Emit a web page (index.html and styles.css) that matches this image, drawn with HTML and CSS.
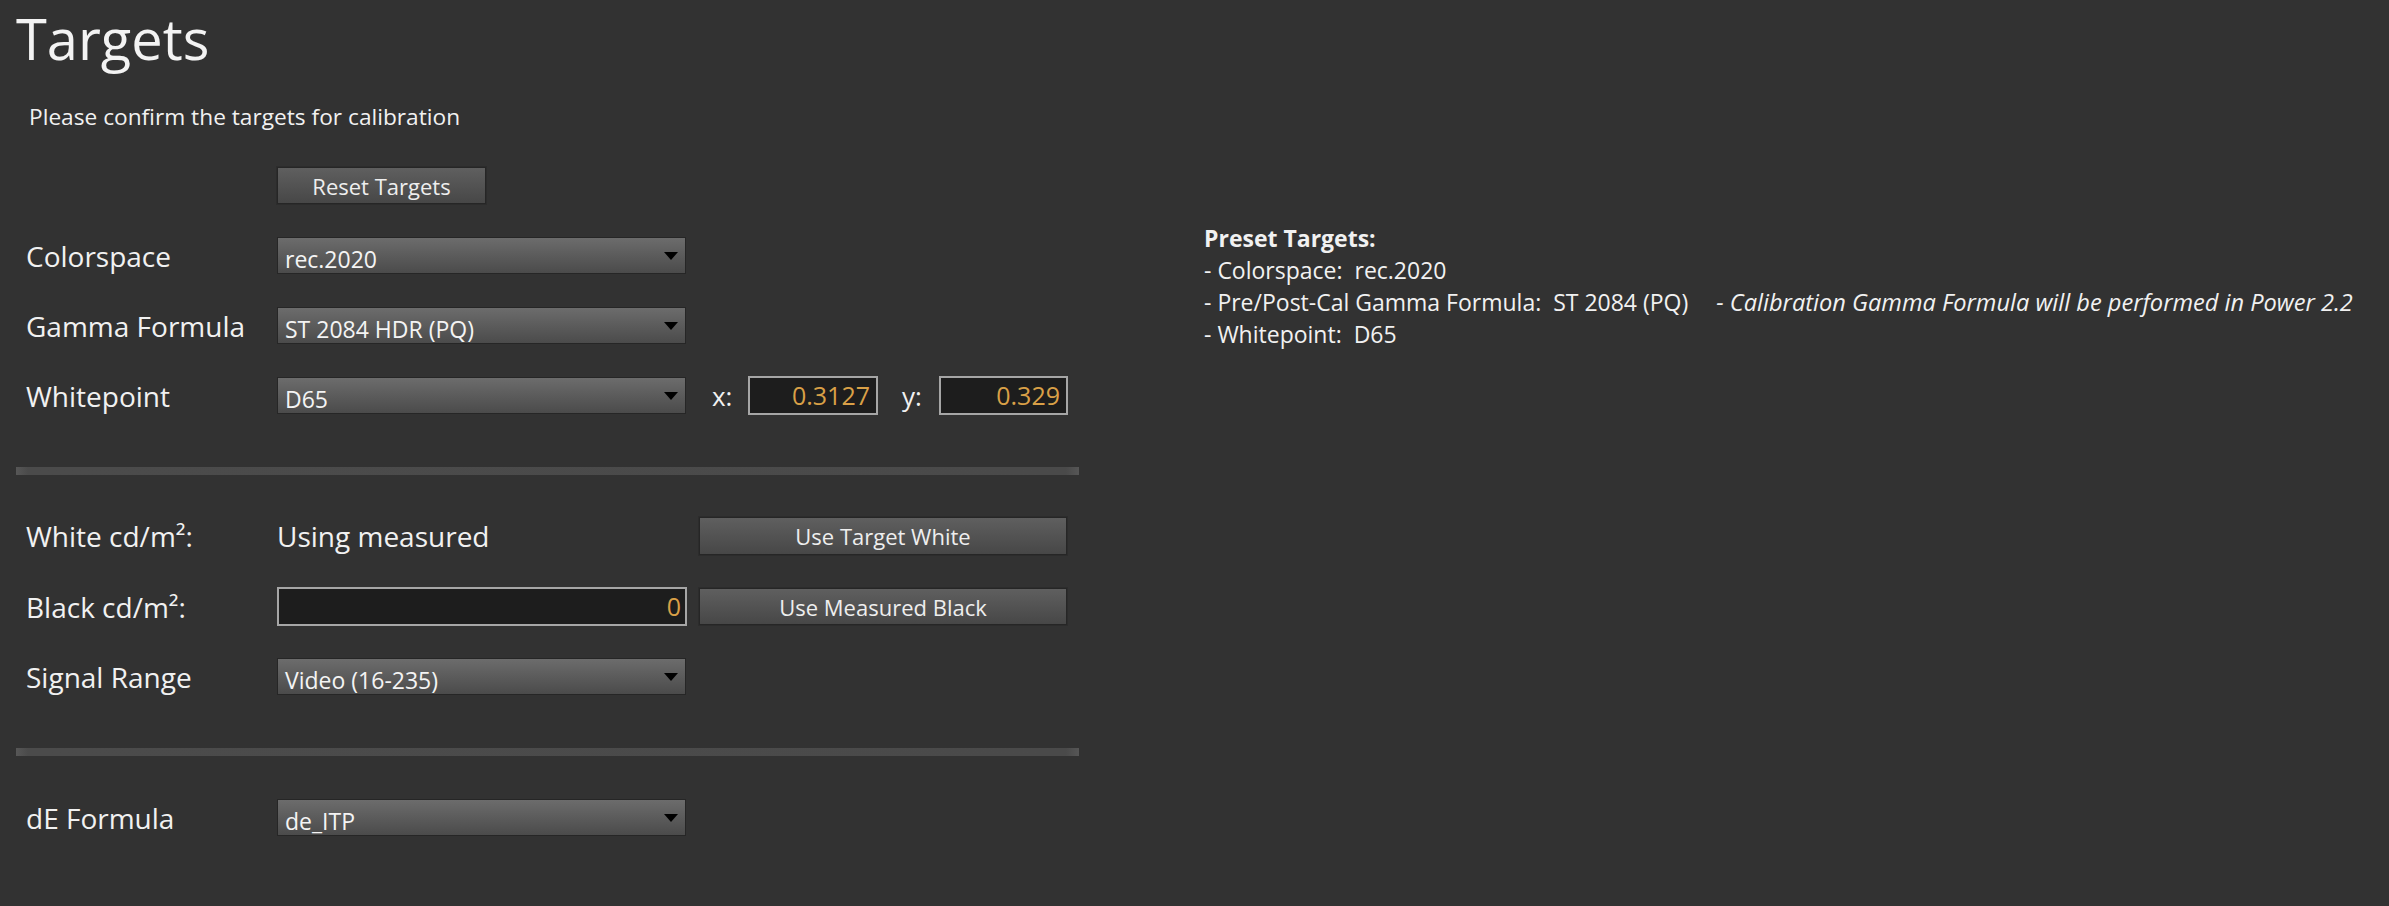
FILE: index.html
```html
<!DOCTYPE html>
<html lang="en">
<head>
<meta charset="utf-8">
<title>Targets</title>
<link rel="stylesheet" href="styles.css">
</head>
<body>
<div class="page">
  <div class="left">
    <h1 class="title">Targets</h1>
    <p class="subtitle">Please confirm the targets for calibration</p>
    <div class="reset-row"><button class="btn btn-reset">Reset Targets</button></div>

    <div class="group">
      <div class="row">
        <span class="label">Colorspace</span>
        <div class="select"><span class="select-text">rec.2020</span><svg class="arrow" width="14" height="8" viewBox="0 0 14 8"><path d="M0 0H14L7 8Z" fill="#000"/></svg></div>
      </div>
      <div class="row">
        <span class="label">Gamma Formula</span>
        <div class="select"><span class="select-text">ST 2084 HDR (PQ)</span><svg class="arrow" width="14" height="8" viewBox="0 0 14 8"><path d="M0 0H14L7 8Z" fill="#000"/></svg></div>
      </div>
      <div class="row">
        <span class="label">Whitepoint</span>
        <div class="select"><span class="select-text">D65</span><svg class="arrow" width="14" height="8" viewBox="0 0 14 8"><path d="M0 0H14L7 8Z" fill="#000"/></svg></div>
        <span class="coord-label coord-x">x:</span>
        <div class="field field-x">0.3127</div>
        <span class="coord-label coord-y">y:</span>
        <div class="field field-y">0.329</div>
      </div>
    </div>

    <div class="separator sep-1"></div>

    <div class="group group-lum">
      <div class="row row-white">
        <span class="label">White cd/m²:</span>
        <span class="value">Using measured</span>
        <button class="btn btn-side btn-white">Use Target White</button>
      </div>
      <div class="row">
        <span class="label">Black cd/m²:</span>
        <div class="field field-black">0</div>
        <button class="btn btn-side">Use Measured Black</button>
      </div>
      <div class="row">
        <span class="label">Signal Range</span>
        <div class="select"><span class="select-text">Video (16-235)</span><svg class="arrow" width="14" height="8" viewBox="0 0 14 8"><path d="M0 0H14L7 8Z" fill="#000"/></svg></div>
      </div>
    </div>

    <div class="separator sep-2"></div>

    <div class="group group-de">
      <div class="row">
        <span class="label">dE Formula</span>
        <div class="select"><span class="select-text">de_ITP</span><svg class="arrow" width="14" height="8" viewBox="0 0 14 8"><path d="M0 0H14L7 8Z" fill="#000"/></svg></div>
      </div>
    </div>
  </div>

  <div class="right">
    <div class="preset-title">Preset Targets:</div>
    <div class="preset-line">- Colorspace:  rec.2020</div>
    <div class="preset-line">- Pre/Post-Cal Gamma Formula:  ST 2084 (PQ)<span class="note">- Calibration Gamma Formula will be performed in Power 2.2</span></div>
    <div class="preset-line">- Whitepoint:  D65</div>
  </div>
</div>
</body>
</html>
```

FILE: styles.css
```css
html, body {
  margin: 0;
  padding: 0;
}

body {
  background: #323232;
  color: #f1f1f1;
  font-family: "Open Sans", "Noto Sans", "DejaVu Sans", sans-serif;
  width: 2389px;
  height: 906px;
  overflow: hidden;
}

.page {
  display: flex;
  align-items: flex-start;
}

.left {
  width: 1063px;
  padding-left: 16px;
  padding-top: 6px;
  display: flex;
  flex-direction: column;
}

.title {
  margin: 0;
  font-size: 56px;
  font-weight: 400;
  line-height: 64px;
  color: #f3f3f3;
}

.subtitle {
  margin: 32px 0 0 13px;
  font-size: 22.7px;
  line-height: 30px;
}

.reset-row {
  margin-top: 35px;
  padding-left: 261px;
  display: flex;
}

.btn {
  font-family: inherit;
  color: #eeeeee;
  border: 1px solid #262626;
  background: linear-gradient(#5f5f5f, #474747);
  box-shadow: 0 0 0 1px #2c2c2c;
  font-size: 22px;
  line-height: 1;
  padding: 0;
  margin: 0;
  display: flex;
  align-items: center;
  justify-content: center;
}

.btn-reset {
  width: 209px;
  height: 37px;
}

.group {
  margin-top: 33px;
  display: flex;
  flex-direction: column;
  gap: 33px;
}

.row {
  height: 37px;
  display: flex;
  align-items: center;
  padding-left: 10px;
}

.row-white {
  height: 38px;
}

.label {
  width: 251px;
  flex: none;
  font-size: 28px;
  line-height: 1;
  color: #f1f1f1;
}

.select {
  box-sizing: border-box;
  width: 409px;
  height: 37px;
  flex: none;
  border: 1px solid #262626;
  background: linear-gradient(#6c6c6c, #4b4b4b);
  display: flex;
  align-items: center;
  justify-content: space-between;
  padding: 0 7px 0 7px;
}

.select-text {
  font-size: 23px;
  line-height: 23px;
  padding-top: 7px;
  color: #f4f4f4;
}

.arrow {
  display: block;
  margin-top: 1px;
}

.coord-label {
  font-size: 26px;
  line-height: 1;
  color: #f1f1f1;
  flex: none;
}

.coord-x {
  margin-left: 26px;
  width: 36px;
}

.coord-y {
  margin-left: 24px;
  width: 37px;
}

.field {
  box-sizing: border-box;
  height: 39px;
  flex: none;
  border: 2px solid #a6a6a6;
  background: #1d1d1d;
  color: #d9a047;
  font-size: 25px;
  line-height: 1;
  display: flex;
  align-items: center;
  justify-content: flex-end;
  padding-right: 6px;
}

.field-x {
  width: 130px;
}

.field-y {
  width: 129px;
}

.field-black {
  width: 410px;
  padding-right: 4px;
}

.value {
  width: 410px;
  flex: none;
  font-size: 28px;
  line-height: 1;
}

.btn-side {
  margin-left: 12px;
  width: 368px;
  height: 37px;
  flex: none;
}

.btn-white {
  height: 38px;
}

.separator {
  width: 1063px;
  height: 8px;
  background: linear-gradient(90deg, #575757 0px, #4b4b4b 12px, #4a4a4a 1050px, #565656 1063px);
}

.sep-1 {
  margin-top: 53px;
}

.group-lum {
  margin-top: 42px;
}

.sep-2 {
  margin-top: 53px;
}

.group-de {
  margin-top: 43px;
}

.right {
  margin-left: 125px;
  padding-top: 222px;
  font-size: 23px;
  line-height: 32px;
  color: #f1f1f1;
}

.preset-title {
  font-weight: 700;
}

.preset-line {
  white-space: pre;
}

.note {
  font-style: italic;
  font-size: 23.6px;
  margin-left: 28px;
}
```
